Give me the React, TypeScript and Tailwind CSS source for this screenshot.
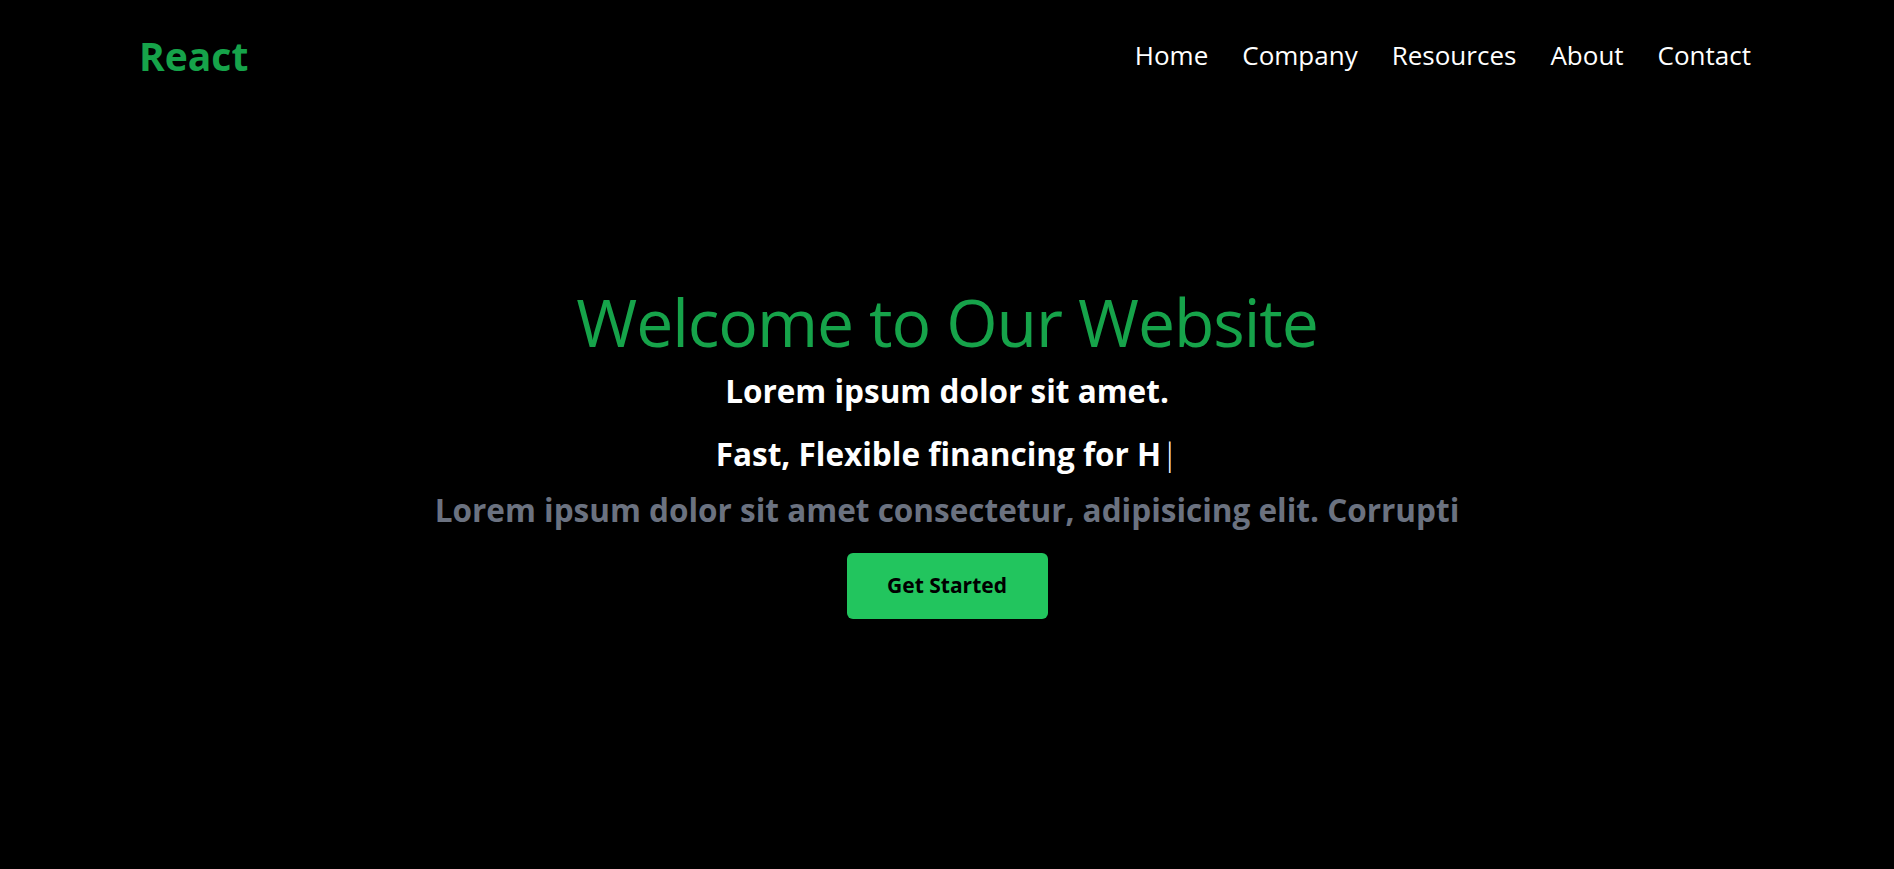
import React from "react";

export default function App() {
  return (
    <div className="min-h-screen w-full bg-black font-['Open_Sans',sans-serif] text-white">
      <header className="flex h-[110px] items-center justify-between pl-[139px] pr-[143px]">
        <h1 className="text-[39px] font-bold leading-none text-[#16a34a]">React</h1>
        <ul className="flex gap-[34px] text-[26px] leading-8 text-white">
          <li>Home</li>
          <li>Company</li>
          <li>Resources</li>
          <li>About</li>
          <li>Contact</li>
        </ul>
      </header>
      <main className="flex flex-col items-center text-center">
        <h1 className="mt-[178px] text-[66px] font-normal leading-none tracking-[-0.016em] text-[#16a34a]">
          Welcome to Our Website
        </h1>
        <p className="mt-[19px] text-[31.5px] font-bold leading-9 text-white">
          Lorem ipsum dolor sit amet.
        </p>
        <p className="mt-[27px] text-[31.5px] font-bold leading-9 text-white">
          Fast, Flexible financing for H<span className="font-light">|</span>
        </p>
        <p className="mt-[20px] text-[31.5px] font-bold leading-9 text-[#6b7280]">
          Lorem ipsum dolor sit amet consectetur, adipisicing elit. Corrupti
        </p>
        <button className="mt-[25px] h-[66px] w-[201px] rounded-md bg-[#22c55e] text-[21px] font-bold text-black">
          Get Started
        </button>
      </main>
    </div>
  );
}
